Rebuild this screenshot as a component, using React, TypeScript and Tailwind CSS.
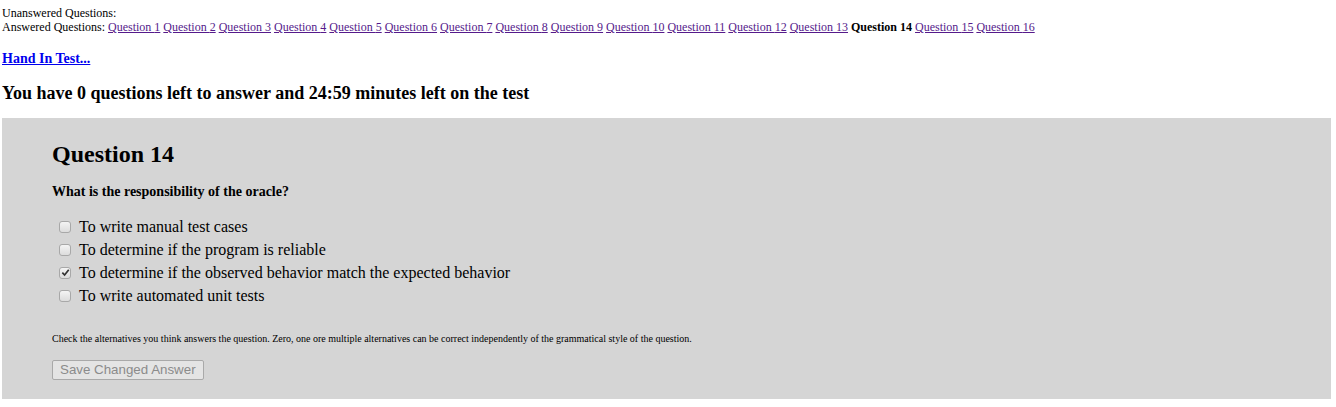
import React from "react";

const questions = Array.from({ length: 16 }, (_, i) => i + 1);

const options = [
  { label: "To write manual test cases", checked: false },
  { label: "To determine if the program is reliable", checked: false },
  { label: "To determine if the observed behavior match the expected behavior", checked: true },
  { label: "To write automated unit tests", checked: false },
];

function Checkbox({ checked }: { checked: boolean }) {
  return (
    <span className="flex h-[12px] w-[12px] shrink-0 items-center justify-center rounded-[3px] border border-[#a8a8a8] bg-gradient-to-b from-[#f4f4f4] to-[#dcdcdc]">
      {checked && (
        <svg viewBox="0 0 10 10" className="h-[9px] w-[9px]">
          <path d="M1.5 5.2 L4 7.8 L8.6 2" fill="none" stroke="#333" strokeWidth="1.9" />
        </svg>
      )}
    </span>
  );
}

export default function App() {
  return (
    <div className="min-h-[407px] bg-white pl-[2px] pr-[5px] pt-[6px] font-['Liberation_Serif',serif] text-black">
      {/* Question navigation */}
      <div className="text-[12px] leading-[14px]">
        <div>Unanswered Questions:</div>
        <div>
          Answered Questions:{" "}
          {questions.map((n) =>
            n === 14 ? (
              <React.Fragment key={n}>
                <b>Question {n}</b>{" "}
              </React.Fragment>
            ) : (
              <React.Fragment key={n}>
                <a href="#" className="text-[#551a8b] underline">
                  Question {n}
                </a>{" "}
              </React.Fragment>
            )
          )}
        </div>
      </div>

      <div className="mt-[17px] text-[14px] font-bold leading-[16px]">
        <a href="#" className="text-[#0000ee] underline">
          Hand In Test...
        </a>
      </div>

      <h3 className="mt-[15px] text-[18px] font-bold leading-[22px]">
        You have 0 questions left to answer and 24:59 minutes left on the test
      </h3>

      {/* Question panel */}
      <section className="mt-[14px] h-[281px] bg-[#d5d5d5] px-[50px] pt-[22px]">
        <h2 className="text-[24px] font-bold leading-[28px]">Question 14</h2>
        <p className="mt-[16px] text-[14px] font-bold leading-[16px]">
          What is the responsibility of the oracle?
        </p>
        <div className="mt-[15px] text-[16px]">
          {options.map((o) => (
            <label key={o.label} className="flex h-[23px] items-center">
              <span className="ml-[7px] mr-[8px]">
                <Checkbox checked={o.checked} />
              </span>
              <span className="leading-[18px]">{o.label}</span>
            </label>
          ))}
        </div>
        <p className="mt-[26px] text-[10px] leading-[12px]">
          Check the alternatives you think answers the question. Zero, one ore multiple alternatives can be correct independently of the grammatical style of the question.
        </p>
        <button
          disabled
          className="mt-[15px] h-[20px] rounded-[2px] border border-[#a9a9a9] bg-[#e4e4e4] px-[7px] font-['Liberation_Sans',sans-serif] text-[13.33px] leading-[16px] text-[#8b8b8b]"
        >
          Save Changed Answer
        </button>
      </section>
    </div>
  );
}
